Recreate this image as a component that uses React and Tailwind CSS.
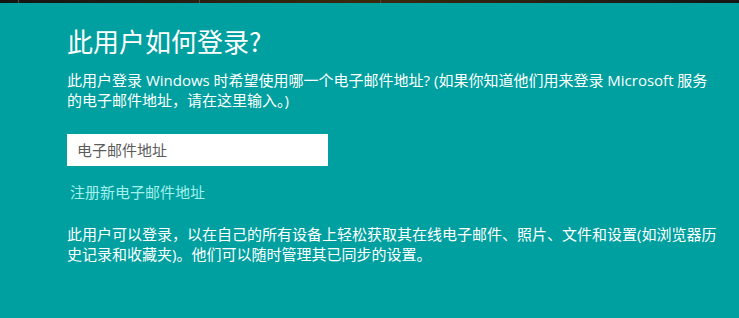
import React from "react";

export default function App() {
  const font = { fontFamily: '"Open Sans", "Noto Sans CJK SC", sans-serif' };
  return (
    <div
      className="w-[739px] h-[318px] bg-[#00a0a0] overflow-hidden flex flex-col text-white"
      style={font}
    >
      <div className="h-[3px] flex bg-gradient-to-r from-[#141414] via-[#3b2a0c] to-[#161616]">
        <div className="w-[19px] border-r border-[#4a4a4a]" />
        <div className="w-[181px] border-r border-[#4a4a4a]" />
        <div className="w-[181px] border-r border-[#4a4a4a]" />
        <div className="flex-1" />
      </div>
      <div className="flex flex-col items-start pl-[67px]">
        <h1 className="mt-[22px] text-[26px] leading-[32px] font-normal font-['Noto_Sans_CJK_SC',sans-serif]">此用户如何登录?</h1>
        <p className="mt-[13px] text-[15px] leading-[20px]">
          此用户登录 Windows 时希望使用哪一个电子邮件地址? (如果你知道他们用来登录 Microsoft 服务
          <br />
          的电子邮件地址，请在这里输入。)
        </p>
        <div className="mt-[24px] w-[261px] h-[32px] bg-white flex items-center px-[10px]">
          <span className="text-[15px] text-[#5c5c5c]">电子邮件地址</span>
        </div>
        <a className="mt-[16px] ml-[3px] text-[15px] leading-[20px] text-[#a2f1ec]">注册新电子邮件地址</a>
        <p className="mt-[22px] text-[15px] leading-[20px]">
          此用户可以登录，以在自己的所有设备上轻松获取其在线电子邮件、照片、文件和设置(如浏览器历
          <br />
          史记录和收藏夹)。他们可以随时管理其已同步的设置。
        </p>
      </div>
    </div>
  );
}
